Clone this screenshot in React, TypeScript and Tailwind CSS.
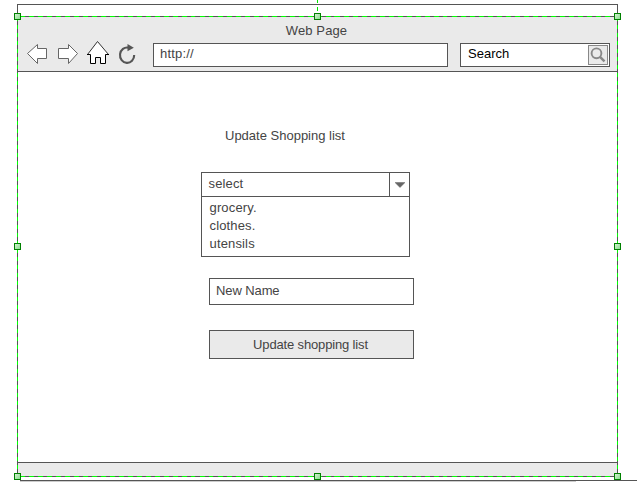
import React from "react";

const handles = [
  [17, 16], [317, 16], [617, 16],
  [17, 246], [617, 246],
  [17, 476], [317, 476], [617, 476],
];

function SelectionOverlay() {
  return (
    <svg className="absolute left-0 top-0" width="637" height="482" shapeRendering="crispEdges">
      <defs>
        <linearGradient id="grip" x1="0" y1="0" x2="1" y2="1">
          <stop offset="0" stopColor="#d8f5d8" />
          <stop offset="1" stopColor="#86d886" />
        </linearGradient>
      </defs>
      <path d="M317.5 0V13" stroke="#00e800" strokeDasharray="4 4" strokeDashoffset="1" />
      <rect x="17.5" y="16.5" width="600" height="460" fill="none" stroke="#555555" />
      <path d="M17.5 16.5H617.5M17.5 476.5H617.5" stroke="#00ff00" strokeDasharray="5 4" strokeDashoffset="-2" />
      <path d="M17.5 16.5V476.5M617.5 16.5V476.5" stroke="#00ff00" strokeDasharray="4 4" />
      {handles.map(([x, y]) => (
        <rect key={`${x}-${y}`} x={x - 2.5} y={y - 2.5} width="6" height="6" fill="url(#grip)" stroke="#008000" />
      ))}
    </svg>
  );
}

function NavIcons() {
  return (
    <svg width="135" height="54" className="shrink-0" fill="#fff" stroke="#666">
      <path d="M9.5 36.5L19.5 27.5V31.5H28.5V41.5H19.5V46.5Z" />
      <path d="M59.5 36.5L50.5 27.5V31.5H40.5V41.5H50.5V46.5Z" />
      <path d="M69.5 37.5L79.5 24.5L90.5 37.5H87.5V46.5H82.5V40.5H77.5V46.5H72.5V37.5Z" stroke="none" />
      <path d="M69.5 37.5L79.5 24.5L90.5 37.5" fill="none" stroke="#333" />
      <path d="M69 37.5H72.5V46.5H77.5V40.5H82.5V46.5H87.5V37.5H91" fill="none" stroke="#000" />
      <path d="M110.5 30.6A7.1 7.7 0 1 0 116.2 38" fill="none" stroke="#555" strokeWidth="2.1" />
      <path d="M109.5 27L115.8 30.7L109.5 34.3Z" fill="#555" stroke="none" />
    </svg>
  );
}

export default function App() {
  return (
    <div className="relative h-[482px] w-[637px] overflow-hidden bg-white pl-[17px] pt-1 font-['Liberation_Sans',Arial,sans-serif] text-[13px] leading-[18px] text-[#444]">
      <div className="flex h-[473px] w-[601px] flex-col border border-[#555]">
        <div className="h-3 shrink-0" />
        <header className="h-[55px] shrink-0 border-b border-[#555] bg-[#eaeaea]">
          <div className="h-0 pr-0.5 text-center">
            <span className="relative top-[5px] tracking-[0.1px]">Web Page</span>
          </div>
          <div className="flex">
            <NavIcons />
            <div className="mt-[26px] h-6 w-[295px] border border-[#555] bg-white pl-1.5 pt-px tracking-[0.2px]">http://</div>
            <div className="ml-3 mt-[26px] flex h-6 w-[150px] justify-between border border-[#555] bg-white pl-[7px] pr-px pt-px text-black">
              <span>Search</span>
              <svg width="20" height="20" fill="none" stroke="#888">
                <rect x=".5" y=".5" width="19" height="19" fill="#eaeaea" />
                <circle cx="8.5" cy="8.3" r="4.9" strokeWidth="1.9" />
                <path d="M12 11.8L16.5 16.3" strokeWidth="2.4" />
              </svg>
            </div>
          </div>
        </header>
        <main className="flex-1">
          <h1 className="ml-[207px] mt-[55px] h-[18px]">Update Shopping list</h1>
          <div className="ml-[183px] mt-[27px] h-[85px] w-[209px] border border-[#555] tracking-[0.15px]">
            <div className="flex h-6 border-b border-[#555]">
              <span className="w-[187px] pl-[6.5px] pt-0.5">select</span>
              <div className="flex flex-1 items-center justify-center border-l border-[#555]">
                <svg width="10" height="6"><path d="M0 .5H10L5 5.5Z" fill="#666" stroke="#666" strokeWidth=".5" /></svg>
              </div>
            </div>
            <ul className="pl-[7.5px] pt-0.5">
              <li>grocery.</li>
              <li>clothes.</li>
              <li>utensils</li>
            </ul>
          </div>
          <div className="ml-[191px] mt-[21px] h-[27px] w-[205px] border border-[#555] pl-1.5 pt-[3px] tracking-[-0.1px]">New Name</div>
          <div className="ml-[191px] mt-[25px] h-[29px] w-[205px] border border-[#555] bg-[#eaeaea] pr-0.5 pt-[5px] text-center tracking-[-0.15px]">Update shopping list</div>
        </main>
        <footer className="h-[14px] shrink-0 border-t border-[#555] bg-[#eaeaea]" />
      </div>
      <div className="ml-[3px] mt-[3px] h-px bg-[#555]" />
      <div className="ml-[3px] h-px w-[556px] bg-[#ccc]" />
      <SelectionOverlay />
    </div>
  );
}
